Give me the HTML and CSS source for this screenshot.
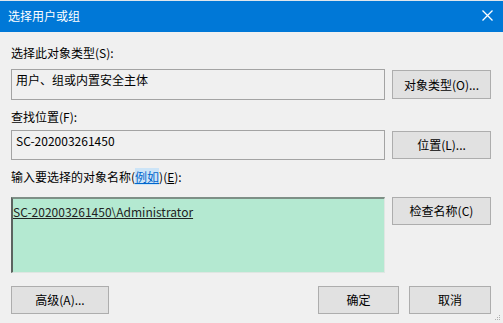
FILE: index.html
```html
<!DOCTYPE html>
<html lang="zh-CN">
<head>
<meta charset="utf-8">
<title>选择用户或组</title>
<link rel="stylesheet" href="styles.css">
</head>
<body>
<div class="dialog">
  <div class="titlebar">
    <span class="title">选择用户或组</span>
    <svg class="close" width="11" height="11" viewBox="0 0 11 11"><path d="M0.5 0.5 L10.5 10.5 M10.5 0.5 L0.5 10.5" stroke="#fff" stroke-width="1.3" fill="none"/></svg>
  </div>
  <div class="content">
    <div class="label l1">选择此对象类型(S):</div>
    <div class="row r1">
      <div class="field f1">用户、组或内置安全主体</div>
      <button class="btn b1">对象类型(O)...</button>
    </div>
    <div class="label l2">查找位置(F):</div>
    <div class="row r2">
      <div class="field f2">SC-202003261450</div>
      <button class="btn b2">位置(L)...</button>
    </div>
    <div class="label l3">输入要选择的对象名称(<span class="link">例如</span>)(<u>E</u>):</div>
    <div class="row r3">
      <div class="names"><u>SC-202003261450\Administrator</u></div>
      <button class="btn b3">检查名称(C)</button>
    </div>
    <div class="footer">
      <button class="btn wide">高级(A)...</button>
      <div class="spacer"></div>
      <button class="btn ok">确定</button>
      <button class="btn cancel">取消</button>
    </div>
  </div>
  <svg class="grip" width="6" height="6" viewBox="0 0 6 6"><rect x="4" y="0" width="1" height="1" fill="#b0b0b0"/><rect x="2" y="2" width="1" height="1" fill="#b0b0b0"/><rect x="4" y="2" width="1" height="1" fill="#b0b0b0"/><rect x="0" y="4" width="1" height="1" fill="#b0b0b0"/><rect x="2" y="4" width="1" height="1" fill="#b0b0b0"/><rect x="4" y="4" width="1" height="1" fill="#b0b0b0"/></svg>
</div>
</body>
</html>
```
FILE: styles.css
```css
* { box-sizing: border-box; }
html, body { margin: 0; padding: 0; }
body {
  width: 503px;
  height: 323px;
  background: #f0f0f0;
  font-family: "Noto Sans CJK SC", "Noto Sans", sans-serif;
  font-size: 12px;
  color: #000;
  overflow: hidden;
}
.dialog {
  position: relative;
  width: 503px;
  height: 323px;
  background: #f0f0f0;
}
.titlebar {
  height: 32px;
  border-top: 1px solid #dfe6ec;
  background: #0078d7;
  display: flex;
  align-items: center;
  padding: 0 10px 2px 8px;
}
.title {
  color: #fff;
  font-size: 12px;
  line-height: 16px;
  flex: 1;
}
.close { display: block; margin-right: 0; }
.content {
  padding: 13px 12px 0 11px;
  display: flex;
  flex-direction: column;
}
.label {
  line-height: 16px;
  height: 16px;
  white-space: nowrap;
}
.l2 { margin-top: 9px; }
.l3 { margin-top: 9px; }
.link {
  color: #0066cc;
  text-decoration: underline;
  background: #cce4f7;
}
.row {
  display: flex;
  align-items: flex-start;
  gap: 7px;
}
.r1 { margin-top: 8px; }
.r2 { margin-top: 5px; }
.r3 { margin-top: 12px; }
.field {
  width: 374px;
  height: 31px;
  border: 1px solid #a3a3a3;
  background: #f0f0f0;
  padding: 2px 0 0 4px;
  line-height: 16px;
  white-space: nowrap;
}
.f2 { height: 30px; }
.names {
  width: 374px;
  height: 76px;
  background: #b4e9d1;
  border-top: 2px solid #7e8f86;
  border-left: 2px solid #5c635f;
  border-right: 1px solid #dfe6e2;
  border-bottom: 1px solid #dfe6e2;
  padding: 5px 0 0 0;
  line-height: 16px;
  color: #222;
  white-space: nowrap;
}
.btn {
  width: 99px;
  height: 28px;
  margin: 0;
  padding: 0;
  font: inherit;
  color: #000;
  background: #e1e1e1;
  border: 1px solid #adadad;
  line-height: 16px;
  white-space: nowrap;
}
.b1 { margin-top: 1px; height: 29px; }
.b2 { margin-top: 1px; }
.footer {
  margin-top: 13px;
  display: flex;
  align-items: flex-start;
}
.wide { width: 98px; }
.spacer { flex: 1; }
.ok { width: 81px; }
.cancel { width: 82px; margin-left: 10px; }
.grip {
  position: absolute;
  right: 2px;
  bottom: 2px;
  display: block;
}
```
